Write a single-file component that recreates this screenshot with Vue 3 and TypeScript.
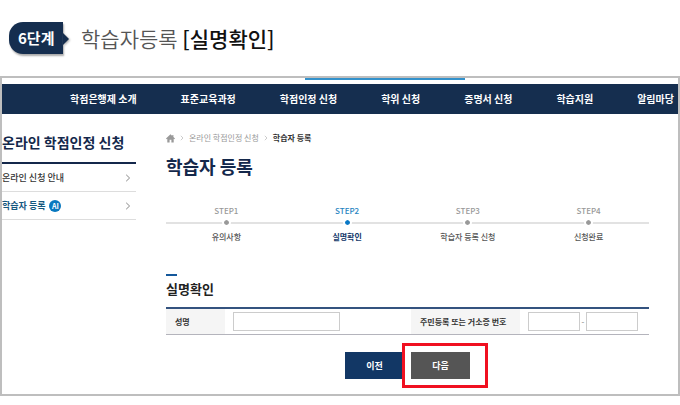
<script setup lang="ts">
interface Step {
  name: string
  label: string
}

const menu: string[] = ['학점은행제 소개', '표준교육과정', '학점인정 신청', '학위 신청', '증명서 신청', '학습지원', '알림마당']
const steps: Step[] = [
  { name: 'STEP1', label: '유의사항' },
  { name: 'STEP2', label: '실명확인' },
  { name: 'STEP3', label: '학습자 등록 신청' },
  { name: 'STEP4', label: '신청완료' },
]
const currentStep = 'STEP2'
</script>

<template>
  <div class="guide">
    <header class="guide-head">
      <span class="badge">6단계</span>
      <h1>학습자등록 <strong>[실명확인]</strong></h1>
    </header>

    <div class="frame">
      <div class="tab-line"></div>
      <nav class="menu">
        <a v-for="item in menu" :key="item" href="#">{{ item }}</a>
      </nav>

      <div class="body">
        <aside class="side">
          <h2>온라인 학점인정 신청</h2>
          <ul>
            <li>
              <a href="#">
                <span>온라인 신청 안내</span>
                <svg class="chevron" viewBox="0 0 6 8"><path d="M1.2 0.8 4.6 4 1.2 7.2" /></svg>
              </a>
            </li>
            <li class="active">
              <a href="#">
                <span>학습자 등록</span>
                <span class="ai">AI</span>
                <svg class="chevron" viewBox="0 0 6 8"><path d="M1.2 0.8 4.6 4 1.2 7.2" /></svg>
              </a>
            </li>
          </ul>
        </aside>

        <main class="main">
          <div class="crumbs">
            <svg class="home" viewBox="0 0 9 9"><path d="M4.5 0.3 0 4.6 0.6 5.2 1.3 4.7V8.6H3.6V5.8H5.4V8.6H7.7V4.7L8.4 5.2 9 4.6 7.4 3V1H6.3V2Z" /></svg>
            <svg class="sep" viewBox="0 0 4 6"><path d="M0.8 0.8 3 3 0.8 5.2" /></svg>
            <a href="#">온라인 학점인정 신청</a>
            <svg class="sep" viewBox="0 0 4 6"><path d="M0.8 0.8 3 3 0.8 5.2" /></svg>
            <b>학습자 등록</b>
          </div>
          <h2 class="title">학습자 등록</h2>

          <ol class="steps">
            <li v-for="step in steps" :key="step.name" :class="{ on: step.name === currentStep }">
              <span class="step-name">{{ step.name }}</span>
              <span class="track"><i class="dot"></i></span>
              <span class="step-label">{{ step.label }}</span>
            </li>
          </ol>

          <form @submit.prevent>
            <h3>실명확인</h3>
            <table>
              <colgroup>
                <col class="c1" /><col /><col class="c3" /><col class="c4" />
              </colgroup>
              <tbody>
                <tr>
                  <th scope="row"><label for="name">성명</label></th>
                  <td><div class="fields"><input id="name" class="wide" type="text" /></div></td>
                  <th scope="row"><label id="id-label" for="id-front">주민등록 또는 거소증 번호</label></th>
                  <td>
                    <div class="fields">
                      <input id="id-front" type="text" />
                      <span class="dash">-</span>
                      <input type="password" aria-labelledby="id-label" />
                    </div>
                  </td>
                </tr>
              </tbody>
            </table>
            <div class="actions">
              <button type="button" class="prev">이전</button>
              <div class="target">
                <button type="submit" class="next">다음</button>
                <span class="highlight"></span>
              </div>
            </div>
          </form>
        </main>
      </div>
    </div>
  </div>
</template>

<style>
body {
  margin: 0;
  background: #fff;
}
</style>

<style scoped>
* {
  box-sizing: border-box;
}

.guide {
  font-family: "Noto Sans CJK KR", "Noto Sans", sans-serif;
  color: #333;
}

h1, h2, h3, ul, ol {
  margin: 0;
  padding: 0;
}

li {
  list-style: none;
}

a {
  color: inherit;
  text-decoration: none;
}

.guide-head {
  display: flex;
  align-items: center;
  gap: 18px;
  height: 76px;
  padding-left: 9px;
}

.badge {
  position: relative;
  width: 54px;
  padding-left: 9px;
  border-radius: 14px 0 0 14px;
  background: #152e4f;
  box-shadow: 1px 2px 2px #aaa;
  color: #fff;
  font-size: 15px;
  font-weight: 700;
  line-height: 32px;
  white-space: nowrap;
}

.badge::after {
  content: "";
  position: absolute;
  left: 100%;
  top: 11px;
  border: solid transparent;
  border-width: 6px 0 6px 6px;
  border-left-color: #152e4f;
  filter: drop-shadow(1px 1px 1px #aaa);
}

h1 {
  color: #555;
  font-size: 21px;
  font-weight: 350;
  line-height: 32px;
}

h1 strong {
  color: #111;
  font-weight: 500;
}

.frame {
  border: 2px solid #bebebe;
  overflow: hidden;
}

.tab-line {
  width: 160px;
  height: 2px;
  margin: 0 0 4px 303px;
  background: #3291cb;
}

.menu {
  display: flex;
  justify-content: space-between;
  padding: 0 4px 0 68px;
  background: #152e4f;
  color: #fff;
  font-size: 10px;
  font-weight: 700;
  line-height: 30px;
  white-space: nowrap;
}

.body {
  display: flex;
  gap: 30px;
  padding-right: 29px;
}

.side {
  flex: none;
  width: 134px;
  padding-top: 16px;
}

.side h2 {
  padding-bottom: 8px;
  color: #14284b;
  font-size: 14px;
  font-weight: 700;
  line-height: 24px;
  white-space: nowrap;
}

.side ul {
  border-top: 2px solid #14284b;
}

.side li {
  border-bottom: 1px solid #ddd;
  color: #333;
  font-size: 9px;
  font-weight: 500;
  line-height: 27px;
}

.side li a {
  display: flex;
  align-items: center;
  gap: 4px;
  padding-right: 5px;
}

.side .active {
  color: #15587f;
  font-weight: 700;
}

.chevron {
  width: 6px;
  height: 8px;
  margin-left: auto;
  fill: none;
  stroke: #888;
}

.ai {
  width: 12px;
  border-radius: 50%;
  background: #0878bf;
  color: #fff;
  font-size: 7px;
  line-height: 12px;
  text-align: center;
}

.main {
  flex: 1;
  min-width: 0;
  padding: 16px 0 15px;
}

.crumbs {
  display: flex;
  align-items: center;
  gap: 5px;
  color: #999;
  font-size: 8px;
  line-height: 16px;
}

.crumbs b {
  color: #333;
}

.home {
  width: 9px;
  height: 9px;
  fill: #999;
}

.sep {
  width: 4px;
  height: 6px;
  fill: none;
  stroke: #ccc;
}

.title {
  padding: 6px 0 25px;
  color: #14284b;
  font-size: 18px;
  font-weight: 700;
  line-height: 28px;
}

.steps {
  display: grid;
  grid-template-columns: repeat(4, 1fr);
  padding-bottom: 29px;
  color: #555;
  font-size: 8px;
  font-weight: 500;
  text-align: center;
}

.steps span {
  display: block;
}

.steps .step-name {
  color: #999;
  line-height: 12px;
}

.track {
  height: 2px;
  margin: 5px 0;
  background: #e2e2e2;
}

.dot {
  display: block;
  width: 5px;
  height: 5px;
  margin: 0 auto;
  border-radius: 50%;
  background: #999;
  outline: 2px solid #fff;
  transform: translateY(-2px);
}

.step-label {
  line-height: 16px;
}

.steps .on .step-name {
  color: #2684bf;
}

.on .dot {
  background: #0878c6;
}

.on .step-label {
  color: #14396b;
  font-weight: 700;
}

h3 {
  color: #222;
  font-size: 13px;
  font-weight: 700;
  line-height: 20px;
  padding-bottom: 8px;
}

h3::before {
  content: "";
  display: block;
  width: 11px;
  height: 2px;
  margin-bottom: 3px;
  background: #14589b;
}

table {
  width: 100%;
  border-top: 2px solid #34537f;
  border-bottom: 1px solid #b4b4bc;
  border-spacing: 0;
  table-layout: fixed;
}

.c1 {
  width: 59px;
}

.c3 {
  width: 109px;
}

.c4 {
  width: 129px;
}

th {
  height: 25px;
  padding: 0 0 0 9px;
  background: #f5f5f5;
  font-size: 8px;
  font-weight: 700;
  line-height: 16px;
  text-align: left;
  white-space: nowrap;
}

td {
  padding: 0 0 0 8px;
}

.fields {
  display: flex;
  align-items: center;
}

input {
  width: 52px;
  height: 19px;
  padding: 0 4px;
  border: 1px solid #ccc;
  border-radius: 0;
  background: #fff;
  font: inherit;
  font-size: 8px;
}

input.wide {
  width: 107px;
}

.dash {
  width: 6px;
  color: #777;
  font-size: 8px;
  line-height: 16px;
  text-align: center;
}

.actions {
  display: flex;
  justify-content: center;
  gap: 7px;
  padding-top: 17px;
}

button {
  display: block;
  width: 59px;
  height: 27px;
  padding: 0;
  border: 0;
  color: #fff;
  font-family: inherit;
  font-size: 9px;
  font-weight: 700;
}

.prev {
  background: #123765;
}

.next {
  background: #555;
}

.target {
  position: relative;
}

.highlight {
  position: absolute;
  inset: -9px -18px -9px -9px;
  border: 3px solid #f01020;
  pointer-events: none;
}
</style>
